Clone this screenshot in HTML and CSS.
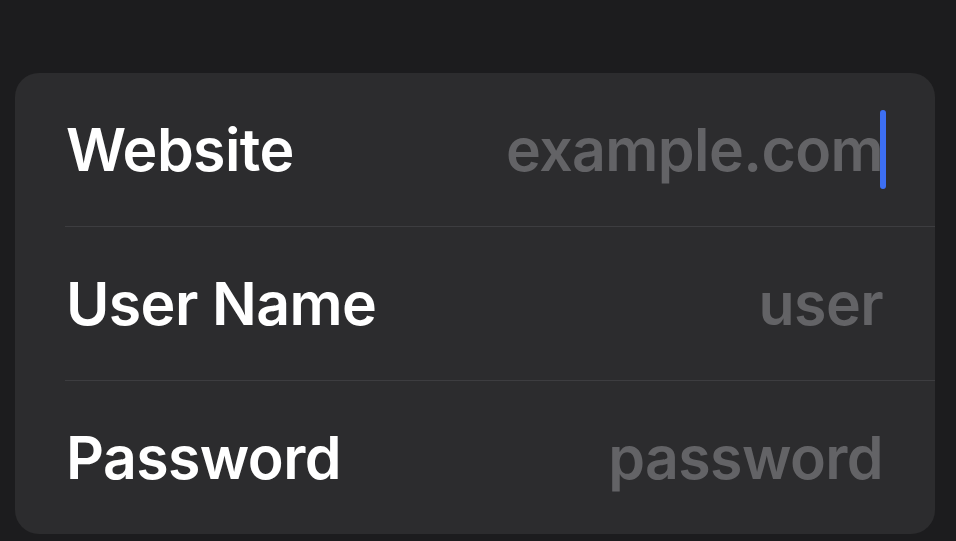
FILE: index.html
```html
<!DOCTYPE html>
<html lang="en">
<head>
  <meta charset="UTF-8">
  <meta name="viewport" content="width=device-width, initial-scale=1.0">
  <title>New Password</title>
  <link rel="stylesheet" href="styles.css">
</head>
<body>
  <div class="card">
    <div class="row">
      <span class="label">Website</span>
      <span class="value">example.com<span class="caret"></span></span>
    </div>
    <div class="row">
      <span class="label">User Name</span>
      <span class="value">user</span>
    </div>
    <div class="row">
      <span class="label">Password</span>
      <span class="value">password</span>
    </div>
  </div>
</body>
</html>
```

FILE: styles.css
```css
body {
  margin: 0;
  padding: 73px 21px 0 15px;
  background: #1c1c1e;
  font-family: Inter, 'Noto Sans', sans-serif;
  height: 541px;
  box-sizing: border-box;
  overflow: hidden;
}
.card {
  background: #2c2c2e;
  border-radius: 24px;
  width: 920px;
}
.row {
  margin-left: 50px;
  padding: 0 52px 0 1px;
  height: 153px;
  display: flex;
  align-items: center;
  justify-content: space-between;
}
.row + .row {
  border-top: 1px solid #3d3d40;
}
.label {
  color: #ffffff;
  font-size: 59px;
  font-weight: 600;
  letter-spacing: -0.6px;
}
.value {
  position: relative;
  color: #636366;
  font-size: 59px;
  font-weight: 600;
  letter-spacing: -0.6px;
}
.caret {
  position: absolute;
  right: -3px;
  top: -4px;
  width: 6px;
  height: 79px;
  border-radius: 3px;
  background: #3d6ff2;
}
```
